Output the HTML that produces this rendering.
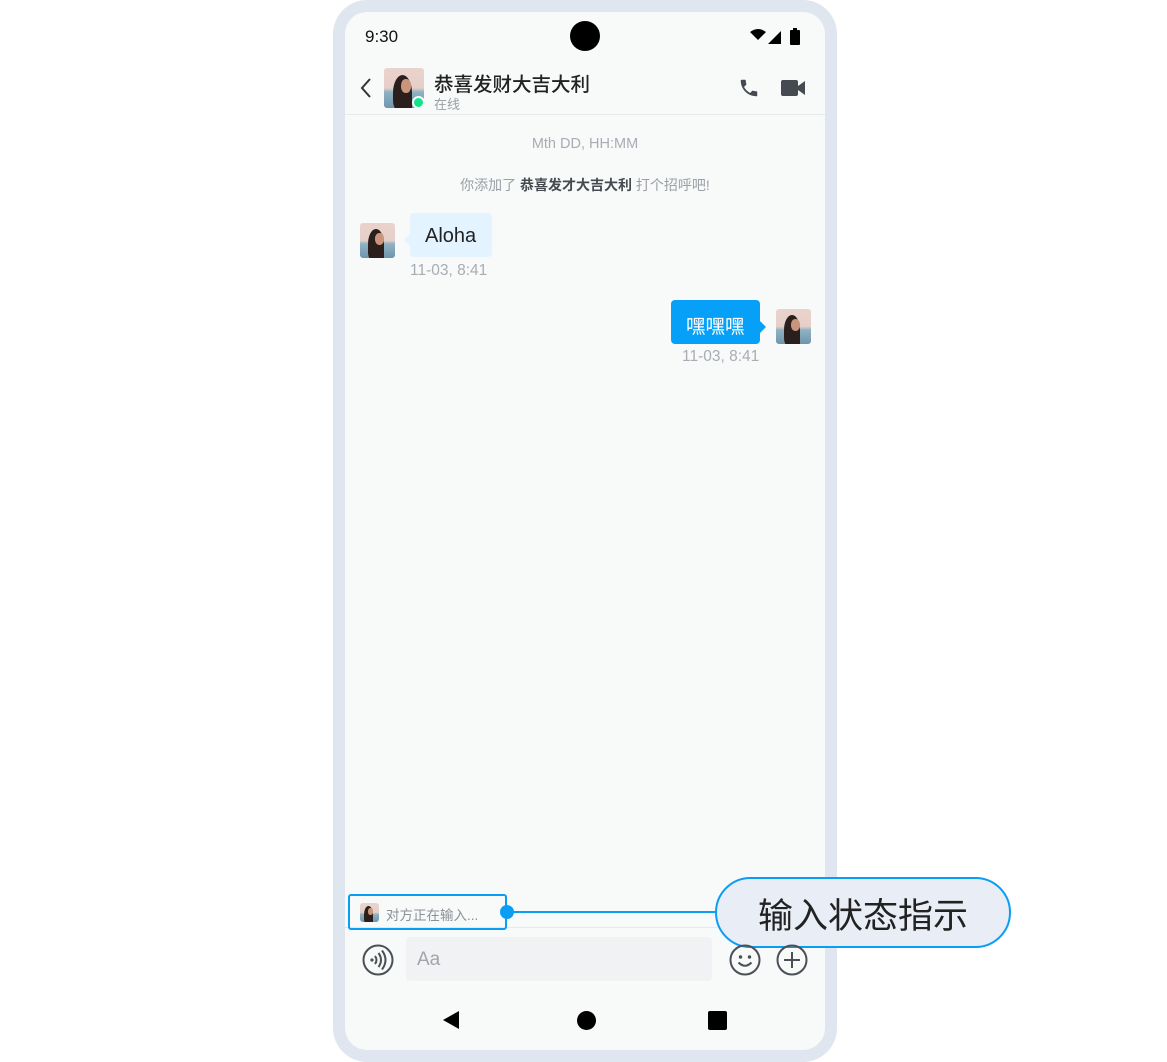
<!DOCTYPE html>
<html><head><meta charset="utf-8"><style>
*{margin:0;padding:0;box-sizing:border-box}
body{width:1167px;height:1062px;background:#fff;position:relative;overflow:hidden;font-family:"Liberation Sans","Noto Sans CJK SC",sans-serif}
.a{position:absolute}
.frame{left:333px;top:0;width:504px;height:1062px;background:#dfe6ef;border-radius:34px}
.scr{left:345px;top:12px;width:480px;height:1038px;background:#f8f9f9;border-radius:22px;overflow:hidden}
.av{position:absolute;border-radius:3px;overflow:hidden;background:linear-gradient(#ead3cc 0%,#e6cfc8 50%,#8fb1c3 60%,#6f95ad 100%)}
.av:before{content:"";position:absolute;left:22%;top:18%;width:48%;height:90%;background:#2a1f1c;border-radius:50% 50% 10% 30%}
.av:after{content:"";position:absolute;left:42%;top:28%;width:26%;height:34%;background:#c9957c;border-radius:45%}
.t{position:absolute;white-space:nowrap}
</style></head><body>
<div class="a frame"></div>
<div class="a scr"></div>
<div class="t" style="left:365px;top:27px;font-size:17px;color:#111">9:30</div>
<div class="a" style="left:570px;top:21px;width:30px;height:30px;border-radius:50%;background:#000"></div>
<svg class="a" style="left:748px;top:27px" width="56" height="18" viewBox="0 0 56 18"><path d="M2 5 Q10 -1 18 5 L10 13Z" fill="#000"/><path d="M20 17 L33 4 L33 17Z" fill="#000"/><rect x="42" y="3" width="10" height="15" rx="1" fill="#000"/><rect x="45" y="1" width="4" height="3" fill="#000"/></svg>
<svg class="a" style="left:359px;top:77px" width="14" height="22"><path d="M11 2 L3 11 L11 20" stroke="#333" stroke-width="2" fill="none"/></svg>
<div class="av" style="left:384px;top:68px;width:40px;height:40px"></div>
<div class="a" style="left:412px;top:96px;width:13px;height:13px;border-radius:50%;background:#0ee48a;border:2px solid #f8f9f9"></div>
<div class="t" style="left:434px;top:68px;font-size:19.5px;color:#222;font-weight:500">恭喜发财大吉大利</div>
<div class="t" style="left:434px;top:94px;font-size:13px;color:#9aa0a6">在线</div>
<svg class="a" style="left:738px;top:76px" width="22" height="24" viewBox="0 0 24 24"><path d="M6.6 10.8c1.4 2.8 3.8 5.1 6.6 6.6l2.2-2.2c.3-.3.7-.4 1-.2 1.1.4 2.3.6 3.6.6.6 0 1 .4 1 1V20c0 .6-.4 1-1 1C10.6 21 3 13.4 3 4c0-.6.4-1 1-1h3.5c.6 0 1 .4 1 1 0 1.2.2 2.4.6 3.6.1.3 0 .7-.2 1z" fill="#444a50"/></svg>
<svg class="a" style="left:780px;top:78px" width="26" height="20" viewBox="0 0 26 20"><rect x="1" y="2" width="17" height="16" rx="2" fill="#444a50"/><path d="M18 8 L25 3 L25 17 L18 12Z" fill="#444a50"/></svg>
<div class="a" style="left:345px;top:114px;width:480px;height:1px;background:#e6e9ec"></div>
<div class="t" style="left:345px;width:480px;text-align:center;top:136px;font-size:14.5px;color:#a8adb3">Mth DD, HH:MM</div>
<div class="t" style="left:345px;width:480px;text-align:center;top:175px;font-size:14px;color:#9aa0a6">你添加了 <b style="color:#454a50;font-weight:600">恭喜发才大吉大利</b> 打个招呼吧!</div>
<div class="av" style="left:360px;top:223px;width:35px;height:35px"></div>
<div class="a" style="left:410px;top:213px;width:82px;height:44px;background:#e3f3ff;border-radius:4px"></div>
<div class="a" style="left:404px;top:234px;width:0;height:0;border:6px solid transparent;border-right-color:#e3f3ff;border-left:0"></div>
<div class="t" style="left:425px;top:225px;font-size:20px;color:#222">Aloha</div>
<div class="t" style="left:410px;top:262px;font-size:15.5px;color:#a8adb3">11-03, 8:41</div>
<div class="a" style="left:671px;top:300px;width:89px;height:44px;background:#06a0f8;border-radius:4px"></div>
<div class="a" style="left:760px;top:321px;width:0;height:0;border:6px solid transparent;border-left-color:#06a0f8;border-right:0"></div>
<div class="t" style="left:686px;top:310px;font-size:19.5px;color:#fff">嘿嘿嘿</div>
<div class="av" style="left:776px;top:309px;width:35px;height:35px"></div>
<div class="t" style="left:682px;top:348px;font-size:15.5px;color:#a8adb3">11-03, 8:41</div>
<div class="a" style="left:345px;top:927px;width:480px;height:1px;background:#e6e9ec"></div>
<div class="a" style="left:348px;top:894px;width:159px;height:36px;border:2px solid #0a9df5;border-radius:3px"></div>
<div class="av" style="left:360px;top:903px;width:19px;height:19px"></div>
<div class="t" style="left:386px;top:904px;font-size:13.5px;color:#8a9096">对方正在输入...</div>
<div class="a" style="left:500px;top:905px;width:14px;height:14px;border-radius:50%;background:#0a9df5"></div>
<div class="a" style="left:507px;top:911px;width:210px;height:2px;background:#0a9df5"></div>
<div class="a" style="left:715px;top:877px;width:296px;height:71px;border:2px solid #0a9df5;border-radius:36px;background:#e8edf6"></div>
<div class="t" style="left:715px;width:296px;text-align:center;top:888px;font-size:35px;color:#222">输入状态指示</div>
<svg class="a" style="left:362px;top:944px" width="32" height="32" viewBox="0 0 32 32"><circle cx="16" cy="16" r="14.5" stroke="#4a5056" stroke-width="2" fill="none"/><circle cx="10" cy="16" r="1.6" fill="#4a5056"/><path d="M13 12 Q16 16 13 20 M16.5 9 Q21.5 16 16.5 23 M20 6.5 Q27 16 20 25.5" stroke="#4a5056" stroke-width="2" fill="none"/></svg>
<div class="a" style="left:406px;top:937px;width:306px;height:44px;background:#f0f2f4;border-radius:4px"></div>
<div class="t" style="left:417px;top:949px;font-size:19px;color:#a0a6ac">Aa</div>
<svg class="a" style="left:729px;top:944px" width="32" height="32" viewBox="0 0 32 32"><circle cx="16" cy="16" r="14.5" stroke="#4a5056" stroke-width="2" fill="none"/><circle cx="11.5" cy="13" r="1.7" fill="#4a5056"/><circle cx="20.5" cy="13" r="1.7" fill="#4a5056"/><path d="M9.5 18.5 Q16 25 22.5 18.5" stroke="#4a5056" stroke-width="2" fill="none"/></svg>
<svg class="a" style="left:776px;top:944px" width="32" height="32" viewBox="0 0 32 32"><circle cx="16" cy="16" r="14.5" stroke="#4a5056" stroke-width="2" fill="none"/><path d="M16 8v16M8 16h16" stroke="#4a5056" stroke-width="2"/></svg>
<svg class="a" style="left:442px;top:1010px" width="18" height="20"><path d="M17 1 L1 10 L17 19Z" fill="#000"/></svg>
<div class="a" style="left:577px;top:1011px;width:19px;height:19px;border-radius:50%;background:#000"></div>
<div class="a" style="left:708px;top:1011px;width:19px;height:19px;border-radius:2px;background:#000"></div>
</body></html>
